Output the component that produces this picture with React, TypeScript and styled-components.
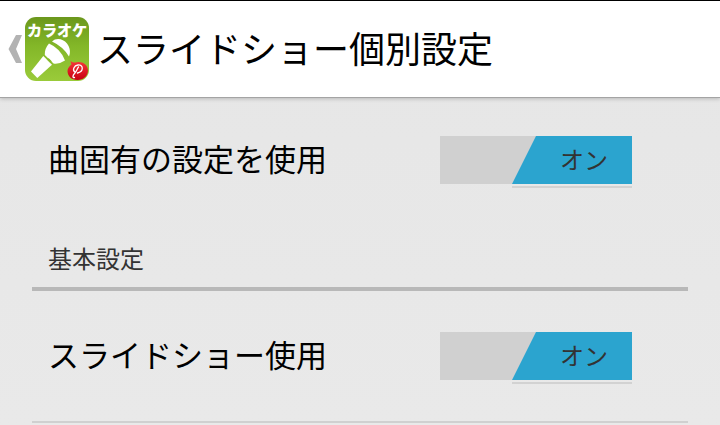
import React from 'react';
import styled, { createGlobalStyle } from 'styled-components';

const GlobalStyle = createGlobalStyle`
  * { box-sizing: border-box; }
  body {
    margin: 0;
    overflow: hidden;
    background: #e8e8e8;
    font-family: "Noto Sans CJK JP", sans-serif;
  }
`;

const Screen = styled.div`
  width: 720px;
  height: 425px;
  overflow: hidden;
  display: flex;
  flex-direction: column;
  background: linear-gradient(#e6e6e6, #e9e9e9);
`;

const ActionBar = styled.header`
  flex: none;
  height: 98px;
  display: flex;
  align-items: center;
  padding-left: 8px;
  background: #fff;
  border-top: 1px solid #000;
  border-bottom: 1px solid #a4a4a4;
  box-shadow: 0 1px 4px rgba(0, 0, 0, 0.2);
`;

const BackIcon = styled.svg`
  flex: none;
  width: 16px;
  height: 30px;
`;

const AppIcon = styled.div`
  position: relative;
  flex: none;
  width: 64px;
  height: 64px;
  margin-left: 1px;
`;

const AppArt = styled.svg`
  display: block;
`;

const AppName = styled.span`
  position: absolute;
  top: 4px;
  left: 2px;
  font-size: 15.2px;
  line-height: 16px;
  font-weight: 900;
  letter-spacing: -0.2px;
  color: #fff;
  white-space: nowrap;
`;

const Title = styled.h1`
  margin: 0 0 5px 8px;
  font-size: 36px;
  line-height: 50px;
  font-weight: 400;
  color: #000;
  white-space: nowrap;
`;

const Settings = styled.main`
  padding: 0 32px;
`;

const Row = styled.div<{ $height: number; $divided?: boolean }>`
  height: ${(p) => p.$height}px;
  display: flex;
  align-items: center;
  justify-content: space-between;
  padding: 0 56px 0 16px;
  border-bottom: ${(p) => (p.$divided ? '2px solid #d0d0d0' : 'none')};
`;

const RowLabel = styled.span`
  font-size: 31px;
  line-height: 44px;
  padding-bottom: 4px;
  color: #000;
  white-space: nowrap;
`;

const SectionHeader = styled.h2`
  height: 69px;
  margin: 0;
  padding: 18px 0 0 16px;
  border-bottom: 4px solid #b8b8b8;
  font-size: 24px;
  line-height: 36px;
  font-weight: 400;
  color: #333;
`;

const Track = styled.div`
  flex: none;
  width: 192px;
  height: 52px;
  margin-top: 4px;
  display: flex;
  justify-content: flex-end;
  background: linear-gradient(#d0d0d0, #d0d0d0) 0 0 / 100% 48px no-repeat;
`;

const Thumb = styled.div`
  width: 120px;
  height: 52px;
  border-bottom: 2px solid #d2d2d2;
`;

const ThumbFace = styled.div`
  height: 48px;
  padding-left: 24px;
  background: #2ba4cf;
  clip-path: polygon(24px 0, 100% 0, 100% 100%, 0 100%);
  font-size: 24px;
  line-height: 46px;
  text-align: center;
  color: #333;
`;

const Switch = () => (
  <Track>
    <Thumb>
      <ThumbFace>オン</ThumbFace>
    </Thumb>
  </Track>
);

const KaraokeIcon = () => (
  <AppIcon>
    <AppArt width="64" height="64" viewBox="0 0 64 64">
      <defs>
        <linearGradient id="green" x1="0" y1="0" x2="0" y2="1">
          <stop offset="0" stopColor="#6b971c" />
          <stop offset="0.45" stopColor="#83b728" />
          <stop offset="1" stopColor="#9acb3a" />
        </linearGradient>
        <linearGradient id="red" x1="0" y1="0" x2="0" y2="1">
          <stop offset="0" stopColor="#f5383b" />
          <stop offset="1" stopColor="#c80010" />
        </linearGradient>
      </defs>
      <rect width="64" height="64" rx="11" fill="url(#green)" />
      <g fill="#fff">
        <path d="M27 24.500 C31 20.500 38 21.500 42 26.500 C45.500 31 45.500 36 44 39.500 Q38 29.500 27 24.500 Z" />
        <path d="M24 26.500 Q35.500 31.500 40 43.500 Q34 47.500 28.500 46.500 L19.800 38 Q19.500 31.500 24 26.500 Z" />
        <path d="M18.300 39 L27 47.700 L12.300 61 L6 54.500 Z" />
      </g>
      <path d="M23.500 42.500 L25.500 44.500" stroke="#86ba2b" strokeWidth="2.200" strokeLinecap="round" />
      <path d="M45.500 44 Q48 46 50 45.500 C56 43.500 63 47 63 53.500 C63 59 58.500 63 52.500 63 C46.500 63 42.500 59 42.500 54 Q42.500 50.500 46.500 47.500 Z" fill="url(#red)" />
      <path d="M49.500 60.500 C47.500 61 47.500 58.500 49.500 56.500 C51.500 54.500 52 52 53.500 50 M50 55 C47 53 49 48.500 53 48 C58.500 47.500 59 54.500 52.500 56" fill="none" stroke="#fff" strokeWidth="1.300" strokeLinecap="round" />
    </AppArt>
    <AppName>カラオケ</AppName>
  </AppIcon>
);

export default function App() {
  return (
    <>
      <GlobalStyle />
      <Screen>
        <ActionBar>
          <BackIcon viewBox="0 0 16 30">
            <path d="M8 1 H14 L8 15 L14 29 H8 L0.500 15 Z" fill="#b3b3b3" />
          </BackIcon>
          <KaraokeIcon />
          <Title>スライドショー個別設定</Title>
        </ActionBar>
        <Settings>
          <Row $height={124}>
            <RowLabel>曲固有の設定を使用</RowLabel>
            <Switch />
          </Row>
          <SectionHeader>基本設定</SectionHeader>
          <Row $height={132} $divided>
            <RowLabel>スライドショー使用</RowLabel>
            <Switch />
          </Row>
        </Settings>
      </Screen>
    </>
  );
}
